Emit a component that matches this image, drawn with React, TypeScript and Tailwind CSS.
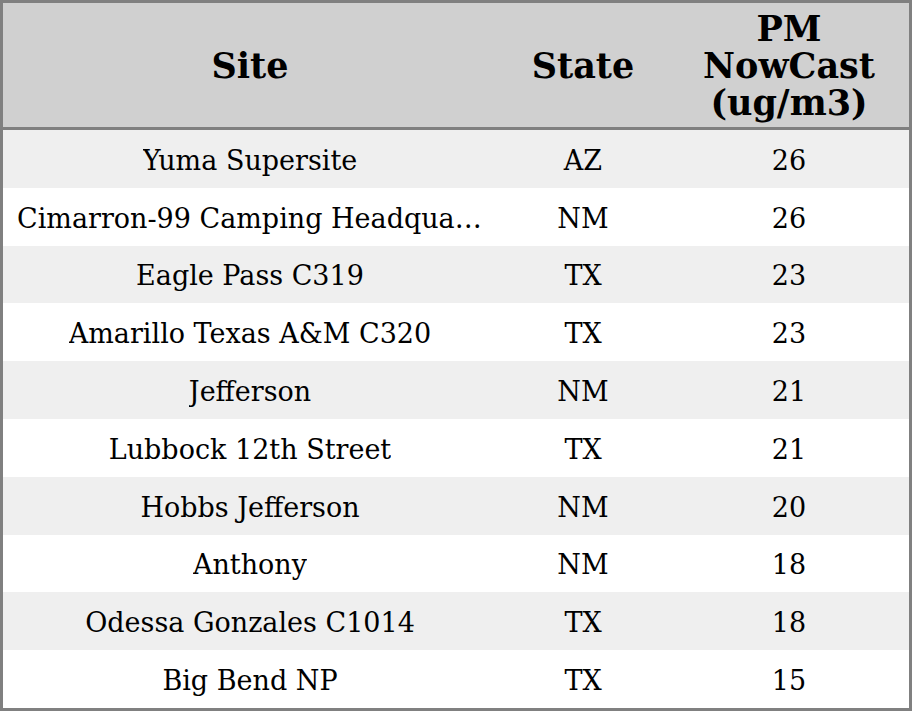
const rows: [string, string, number][] = [
  ['Yuma Supersite', 'AZ', 26],
  ['Cimarron-99 Camping Headquarters', 'NM', 26],
  ['Eagle Pass C319', 'TX', 23],
  ['Amarillo Texas A&M C320', 'TX', 23],
  ['Jefferson', 'NM', 21],
  ['Lubbock 12th Street', 'TX', 21],
  ['Hobbs Jefferson', 'NM', 20],
  ['Anthony', 'NM', 18],
  ['Odessa Gonzales C1014', 'TX', 18],
  ['Big Bend NP', 'TX', 15],
];

export default function App() {
  return (
    <div className="w-[912px] h-[711px] overflow-hidden bg-white font-['DejaVu_Serif',serif] text-black">
      <div className="border-[3px] border-[#808080]">
        {/* Header */}
        <div className="grid grid-cols-[494px_172px_240px] h-[127px] bg-[#d0d0d0] border-b-[3px] border-[#808080] text-[35px] font-bold leading-[37px]">
          <div className="flex items-center justify-center px-[14px] text-center">Site</div>
          <div className="flex items-center justify-center px-[14px] text-center">State</div>
          <div className="flex items-center justify-center px-[14px] text-center">PM NowCast (ug/m3)</div>
        </div>

        {/* Rows */}
        {rows.map(([site, state, value], i) => (
          <div
            key={i}
            className={`grid grid-cols-[494px_172px_240px] h-[57.8px] pt-[4px] text-[27px] leading-[32px] ${
              i % 2 === 0 ? 'bg-[#efefef]' : 'bg-white'
            }`}
          >
            <div className="flex items-center justify-center px-[14px] min-w-0">
              <span className="truncate">{site}</span>
            </div>
            <div className="flex items-center justify-center px-[14px]">{state}</div>
            <div className="flex items-center justify-center px-[14px]">{value}</div>
          </div>
        ))}
      </div>
    </div>
  );
}
